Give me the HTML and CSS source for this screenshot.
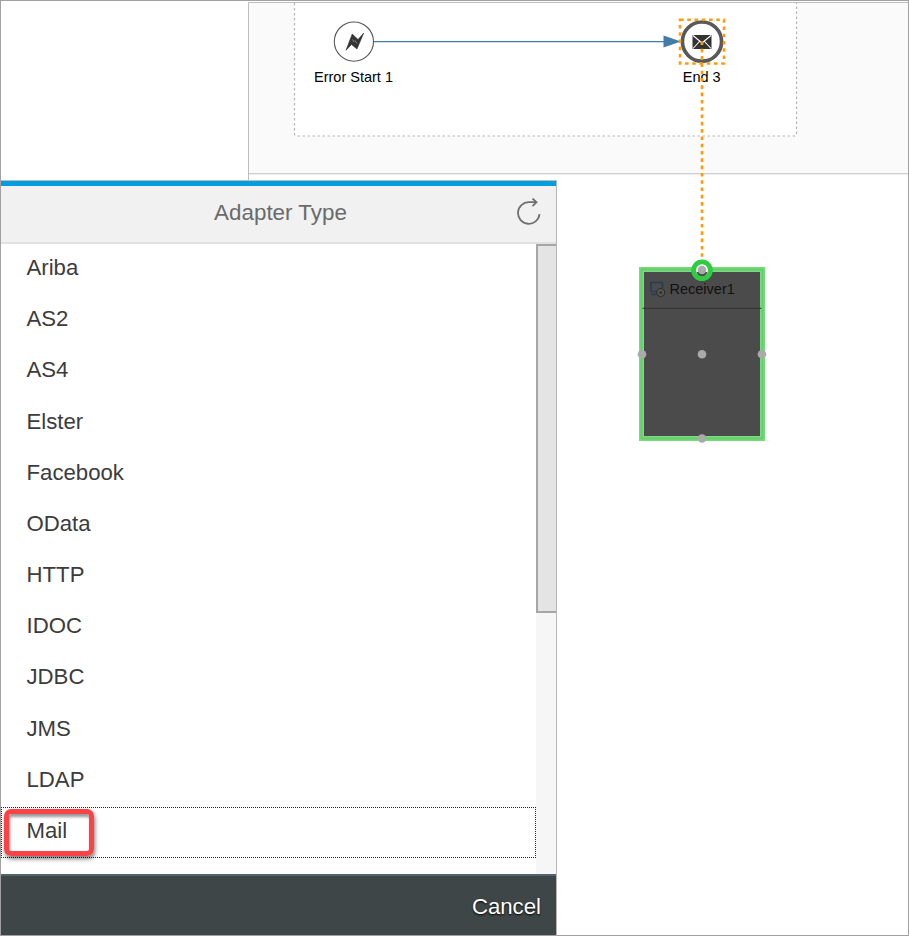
FILE: index.html
```html
<!DOCTYPE html>
<html lang="en">
<head>
<meta charset="utf-8">
<title>Adapter Type</title>
<link rel="stylesheet" href="styles.css">
</head>
<body>
<main class="editor">
  <svg class="canvas" width="909" height="936" viewBox="0 0 909 936">
    <path class="lane" d="M248.500 182V2.500H909M908 173.800H248.500"/>
    <rect class="lane-fill" x="249" y="3" width="659" height="170"/>
    <path class="subprocess" d="M294.500 3V133.500Q294.500 136 297 136H794Q796.500 136 796.500 133.500V3"/>
    <path class="flow" d="M374 41.600H664"/>
    <path class="arrow" d="M663.500 35.500L681 41.600L663.500 47.500Z"/>
    <circle class="start" cx="353.900" cy="41.600" r="19.600"/>
    <path class="bolt" d="M346 50.300L352.200 34L358 39.500L363.700 33L357 49L351.500 44.500Z"/>
    <path class="bolt-gap" d="M352.500 39.500L354 42M354.800 40.500L357 43.500"/>
    <text class="label" x="353.500" y="82" text-anchor="middle">Error Start 1</text>
    <circle class="end" cx="702" cy="41.600" r="19.600"/>
    <rect class="mail" x="692.500" y="35" width="19" height="14"/>
    <path class="mail-fold" d="M693 35.500L702 43L711 35.500M693 48.500L699.500 41.500M711 48.500L704.500 41.500"/>
    <text class="label" x="701.700" y="82" text-anchor="middle">End 3</text>
    <rect class="selection" x="680" y="19.700" width="44" height="43.800"/>
    <path class="link" d="M702 41.500V262"/>
    <rect class="receiver" x="641.500" y="269.500" width="121" height="169"/>
    <rect class="receiver-line" x="641.500" y="269.500" width="121" height="169"/>
    <path class="divider" d="M642.500 308.300H761.500"/>
    <path class="monitor" d="M656.500 291.500H651V282.500H662.500V288M651 294.300H656"/>
    <circle class="badge" cx="660.700" cy="292.500" r="4"/>
    <circle class="badge-dot" cx="660.700" cy="292.500" r="1.500"/>
    <text class="receiver-label" x="669.500" y="294">Receiver1</text>
    <circle class="port-ring" cx="702" cy="270.300" r="8.400"/>
    <path class="port-shadow" d="M696.500 272A5.700 5.700 0 0 0 707.500 272Z"/>
    <g class="handles">
      <circle cx="702" cy="270" r="4.300"/><circle cx="642" cy="354.300" r="4.300"/>
      <circle cx="702" cy="354.300" r="4.300"/><circle cx="762" cy="354.300" r="4.300"/>
      <circle cx="702" cy="438.500" r="4.300"/>
    </g>
  </svg>
  <section class="dialog">
    <header class="head">
      <h1>Adapter Type</h1>
      <svg class="refresh" width="28" height="30" viewBox="0 0 28 30"><path d="M24.500 16.200A10.800 10.800 0 1 1 14 4.200H21M17.500 0.500L21.500 4.200L17.500 8.200"/></svg>
    </header>
    <div class="body">
      <ul class="list">
        <li>Ariba</li><li>AS2</li><li>AS4</li><li>Elster</li><li>Facebook</li><li>OData</li>
        <li>HTTP</li><li>IDOC</li><li>JDBC</li><li>JMS</li><li>LDAP</li>
        <li class="focused">Mail<span class="callout"></span></li>
      </ul>
      <div class="track"><div class="thumb"></div></div>
    </div>
    <footer class="foot"><span>Cancel</span></footer>
  </section>
  <div class="frame"></div>
</main>
</body>
</html>
```
FILE: styles.css
```css
* { box-sizing: border-box; }
body { margin: 0; background: #fff; font-family: "Liberation Sans", Arial, sans-serif; }
.editor { position: relative; width: 909px; height: 936px; overflow: hidden; }
.frame { position: absolute; inset: 0; border: 1px solid #a3a0a3; pointer-events: none; }
.canvas { display: block; }
.canvas path { fill: none; }
.canvas .lane { stroke: #bebebe; }
.lane-fill { fill: #fafafa; }
.canvas .subprocess { fill: #fff; stroke: #b5b5b5; stroke-width: 1.2; stroke-dasharray: 2.5 2.5; }
.canvas .flow { stroke: #427cac; stroke-width: 1.2; }
.canvas .arrow { fill: #427cac; }
.start { fill: #fff; stroke: #585858; stroke-width: 1.1; }
.canvas .bolt { fill: #333; stroke: #333; stroke-width: .6; }
.canvas .bolt-gap { stroke: #999; stroke-width: .8; }
.end { fill: #fff; stroke: #595959; stroke-width: 3.7; }
.mail { fill: #333; }
.canvas .mail-fold { stroke: #fff; stroke-width: 1.1; }
.label, .receiver-label { font-size: 14.5px; fill: #000; }
.selection { fill: none; stroke: #ff9c0a; stroke-width: 2.5; stroke-dasharray: 3.6 3.65; }
.canvas .link { stroke: #ff9c0a; stroke-width: 2.6; stroke-dasharray: 3.6 3.7; }
.receiver { fill: #4b4b4b; stroke: #75dc7b; stroke-width: 5; }
.receiver-line { fill: none; stroke: #66cb6c; stroke-width: 1.8; }
.canvas .divider { stroke: #303030; }
.canvas .monitor { stroke: #263d54; stroke-width: 1.7; }
.badge { fill: #555548; stroke: #2c3035; stroke-width: 1.2; }
.badge-dot { fill: #303030; }
.receiver-label { fill: #111; }
.port-ring { fill: #fff; stroke: #2ecc40; stroke-width: 4.8; }
.canvas .port-shadow { fill: #4b4b4b; }
.handles { fill: #aaa; }
.dialog { position: absolute; left: 0; top: 180px; width: 557px; height: 756px; display: flex; flex-direction: column; background: #fff; border-top: 1px solid #bebebe; border-right: 1px solid #b5b5b5; }
.head { position: relative; flex: none; height: 63px; border-top: 5px solid #009de0; border-bottom: 2px solid #e1e1e1; background: #f1f1f1; }
h1 { margin: 0; padding-left: 5px; text-align: center; font-size: 22.4px; font-weight: 400; line-height: 53px; color: #6a6a6a; }
.refresh { position: absolute; right: 13px; top: 12px; }
.refresh path { fill: none; stroke: #707070; stroke-width: 1.8; }
.body { display: flex; flex: 1; min-height: 0; }
.list { flex: 1; margin: 0; padding: 0; list-style: none; overflow: hidden; }
.list li { height: 51.18px; padding-left: 26.5px; font-size: 22.2px; line-height: 47px; color: #3c3c3c; }
.list .focused { position: relative; margin-left: 1px; padding-left: 25.5px; }
.focused::after { content: ""; position: absolute; left: 0; right: 0; top: 0; height: 49px; border: 1px dotted #222; }
.callout { position: absolute; z-index: 1; left: 3px; top: 2px; width: 90px; height: 47px; border: 5px solid #fb4347; border-radius: 7px; box-shadow: 1px 3px 4px rgba(0,0,0,.5), inset 1px 3px 3px rgba(0,0,0,.4); }
.track { flex: none; width: 20px; background: #f6f6f6; }
.thumb { height: 369px; background: #e4e4e4; border: 2px solid #a6a6a6; border-right: 0; }
.foot { display: flex; flex: none; justify-content: flex-end; height: 62px; padding-right: 15px; border-top: 2px solid #52636b; background: #3f4648; color: #fff; font-size: 22.2px; line-height: 61px; text-shadow: 0 1px 2px #000; }
```
